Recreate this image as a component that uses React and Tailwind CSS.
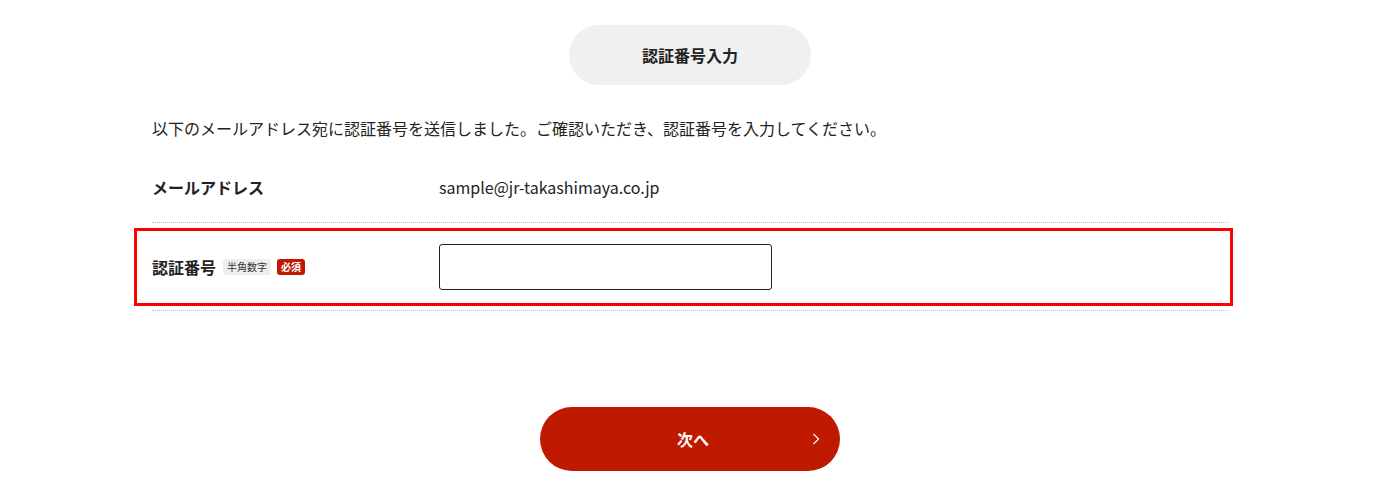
export default function App() {
  const font = { fontFamily: '"Noto Sans CJK JP", "Noto Sans", sans-serif' };
  return (
    <div className="w-full min-h-[490px] bg-white text-[#222]" style={font}>
      <div className="mx-auto w-[1076px] pt-[25px]">
        <div className="flex justify-center">
          <div className="w-[242px] h-[60px] rounded-full bg-[#f0f0f0] flex items-center justify-center text-[16px] font-bold">
            認証番号入力
          </div>
        </div>
        <p className="mt-[32px] text-[16px] leading-[22px]">
          以下のメールアドレス宛に認証番号を送信しました。ご確認いただき、認証番号を入力してください。
        </p>
        <div className="mt-[36px] pb-[23px] flex items-center leading-[24px] border-b border-dotted border-[#bbb]">
          <div className="w-[287px] text-[16px] font-bold">メールアドレス</div>
          <div className="text-[16px]">sample@jr-takashimaya.co.jp</div>
        </div>
        <div className="relative flex items-center h-[88px] border-b border-dotted border-[#bbb]">
          <div className="absolute left-[-18px] right-[-5px] top-[5px] bottom-[4px] border-[3px] border-[#ff0000] pointer-events-none"></div>
          <div className="w-[287px] flex items-center">
            <span className="text-[16px] font-bold">認証番号</span>
            <span className="ml-[7px] px-[4px] h-[16px] rounded-[3px] bg-[#eeeeee] text-[10px] leading-[16px] text-[#333]">半角数字</span>
            <span className="ml-[6px] px-[4px] h-[16px] rounded-[3px] bg-[#bf1900] text-[10px] leading-[16px] text-white font-bold">必須</span>
          </div>
          <input type="text" className="w-[333px] h-[46px] rounded-[3px] border border-[#222] outline-none px-3" />
        </div>
        <div className="mt-[96px] flex justify-center">
          <button className="relative w-[300px] h-[64px] rounded-full bg-[#bf1900] text-white text-[16px] font-bold flex items-center justify-center pl-[6px]">
            次へ
            <svg className="absolute right-[20px] top-1/2 -translate-y-1/2" width="8" height="13" viewBox="0 0 8 13" fill="none">
              <path d="M1.5 1.5 L6.5 6.5 L1.5 11.5" stroke="white" strokeWidth="1.2" />
            </svg>
          </button>
        </div>
      </div>
    </div>
  );
}
